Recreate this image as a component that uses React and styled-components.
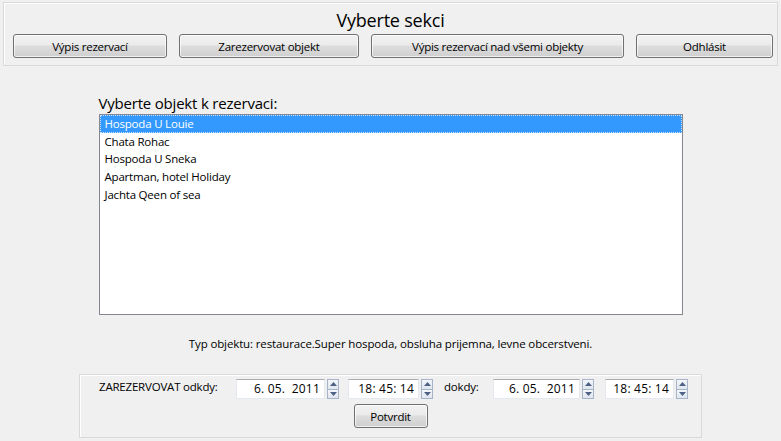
import React, { useState } from "react";
import styled, { createGlobalStyle } from "styled-components";

const GlobalStyle = createGlobalStyle`
  html, body {
    margin: 0;
    padding: 0;
    background: #f0f0f0;
  }
  body {
    font-family: "Open Sans", "Noto Sans", "Liberation Sans", sans-serif;
    color: #000;
  }
`;

const objects = [
  "Hospoda U Louie",
  "Chata Rohac",
  "Hospoda U Sneka",
  "Apartman, hotel Holiday",
  "Jachta Qeen of sea",
];

const Page = styled.div`
  width: 781px;
  height: 441px;
  overflow: hidden;
  padding: 2px 0 0 0;
  box-sizing: border-box;
  display: flex;
  flex-direction: column;
  align-items: center;
`;

const TopPanel = styled.section`
  width: 775px;
  height: 64px;
  box-sizing: border-box;
  border: 1px solid #d9d9d9;
  box-shadow: inset 1px 1px 0 #fff;
  display: flex;
  flex-direction: column;
  align-items: center;
  padding: 4px 9px 0 9px;
`;

const Title = styled.h1`
  margin: 0;
  font-weight: 400;
  font-size: 18px;
  line-height: 26px;
  letter-spacing: -0.2px;
`;

const ButtonBar = styled.div`
  width: 100%;
  display: flex;
  gap: 12px;
  margin-top: 1px;
`;

const Button = styled.button`
  width: ${(p) => p.$w}px;
  height: 24px;
  flex: none;
  box-sizing: border-box;
  border: 1px solid #707070;
  border-radius: 3px;
  background: linear-gradient(#f2f2f2 0%, #ebebeb 45%, #dddddd 50%, #cfcfcf 100%);
  box-shadow: inset 0 0 0 1px rgba(255, 255, 255, 0.7);
  font-family: inherit;
  font-size: 11.5px;
  letter-spacing: -0.25px;
  color: #000;
  padding: 0;
  cursor: default;
`;

const Content = styled.main`
  width: 584px;
  display: flex;
  flex-direction: column;
  margin-top: 26px;
`;

const Label = styled.div`
  font-size: 15px;
  line-height: 22px;
  letter-spacing: -0.2px;
`;

const ListBox = styled.ul`
  list-style: none;
  margin: 0;
  padding: 0;
  height: 201px;
  box-sizing: border-box;
  border: 1px solid #828790;
  background: #fff;
`;

const Item = styled.li`
  height: 17.7px;
  box-sizing: border-box;
  padding-left: 5px;
  font-size: 11.5px;
  line-height: 18px;
  letter-spacing: -0.2px;
  background: ${(p) => (p.$active ? "#3399ff" : "transparent")};
  color: ${(p) => (p.$active ? "#fff" : "#000")};
  outline: ${(p) => (p.$active ? "1px dotted #cfe3ff" : "none")};
  outline-offset: -1px;
`;

const TypeInfo = styled.p`
  margin: 20px 0 0 0;
  text-align: center;
  font-size: 11.5px;
  line-height: 18px;
  letter-spacing: -0.13px;
`;

const BottomPanel = styled.section`
  width: 623px;
  height: 64px;
  box-sizing: border-box;
  margin-top: 21px;
  border: 1px solid #d9d9d9;
  box-shadow: inset 1px 1px 0 #fff;
  padding: 4px 0 0 19px;
  display: flex;
  flex-direction: column;
`;

const Row = styled.div`
  display: flex;
  align-items: flex-start;
  height: 21px;
`;

const RowLabel = styled.span`
  font-size: 11.5px;
  letter-spacing: -0.2px;
  line-height: 16px;
  width: ${(p) => p.$w}px;
  flex: none;
`;

const Field = styled.div`
  width: ${(p) => p.$w}px;
  height: 20px;
  flex: none;
  box-sizing: border-box;
  background: #fff;
  border: 1px solid #e3e9ef;
  border-top-color: #abadb3;
  font-size: 12px;
  line-height: 18px;
  letter-spacing: 0.2px;
  text-align: right;
  padding-right: 4px;
  white-space: pre;
`;

const Spinner = styled.div`
  width: 12px;
  height: 20px;
  flex: none;
  margin: 0 ${(p) => p.$gap}px 0 2px;
  display: flex;
  flex-direction: column;
`;

const SpinHalf = styled.div`
  flex: 1;
  box-sizing: border-box;
  border: 1px solid #a7b4c8;
  background: linear-gradient(#f4f7fb, #dfe6ef);
  display: flex;
  align-items: center;
  justify-content: center;
  & + & {
    border-top: none;
  }
`;

const Arrow = ({ up }) => (
  <svg width="7" height="4" viewBox="0 0 7 4">
    <path d={up ? "M0 4 L3.5 0 L7 4 Z" : "M0 0 L3.5 4 L7 0 Z"} fill="#4d6185" />
  </svg>
);

const Spin = ({ gap }) => (
  <Spinner $gap={gap}>
    <SpinHalf>
      <Arrow up />
    </SpinHalf>
    <SpinHalf>
      <Arrow />
    </SpinHalf>
  </Spinner>
);

const ConfirmRow = styled.div`
  display: flex;
  justify-content: center;
  padding-right: 19px;
  margin-top: 4px;
`;

export default function App() {
  const [selected, setSelected] = useState(0);
  return (
    <>
      <GlobalStyle />
      <Page>
        <TopPanel>
          <Title>Vyberte sekci</Title>
          <ButtonBar>
            <Button $w={154}>Výpis rezervací</Button>
            <Button $w={180}>Zarezervovat objekt</Button>
            <Button $w={253}>Výpis rezervací nad všemi objekty</Button>
            <Button $w={137}>Odhlásit</Button>
          </ButtonBar>
        </TopPanel>
        <Content>
          <Label>Vyberte objekt k rezervaci:</Label>
          <ListBox>
            {objects.map((name, i) => (
              <Item key={name} $active={i === selected} onClick={() => setSelected(i)}>
                {name}
              </Item>
            ))}
          </ListBox>
        </Content>
        <TypeInfo>
          Typ objektu: restaurace.Super hospoda, obsluha prijemna, levne obcerstveni.
        </TypeInfo>
        <BottomPanel>
          <Row>
            <RowLabel $w={137}>ZAREZERVOVAT odkdy:</RowLabel>
            <Field $w={89}>{"6. 05.  2011"}</Field>
            <Spin gap={9} />
            <Field $w={71}>{"18: 45: 14"}</Field>
            <Spin gap={11} />
            <RowLabel $w={49}>dokdy:</RowLabel>
            <Field $w={87}>{"6. 05.  2011"}</Field>
            <Spin gap={11} />
            <Field $w={69}>{"18: 45: 14"}</Field>
            <Spin gap={0} />
          </Row>
          <ConfirmRow>
            <Button $w={74}>Potvrdit</Button>
          </ConfirmRow>
        </BottomPanel>
      </Page>
    </>
  );
}
